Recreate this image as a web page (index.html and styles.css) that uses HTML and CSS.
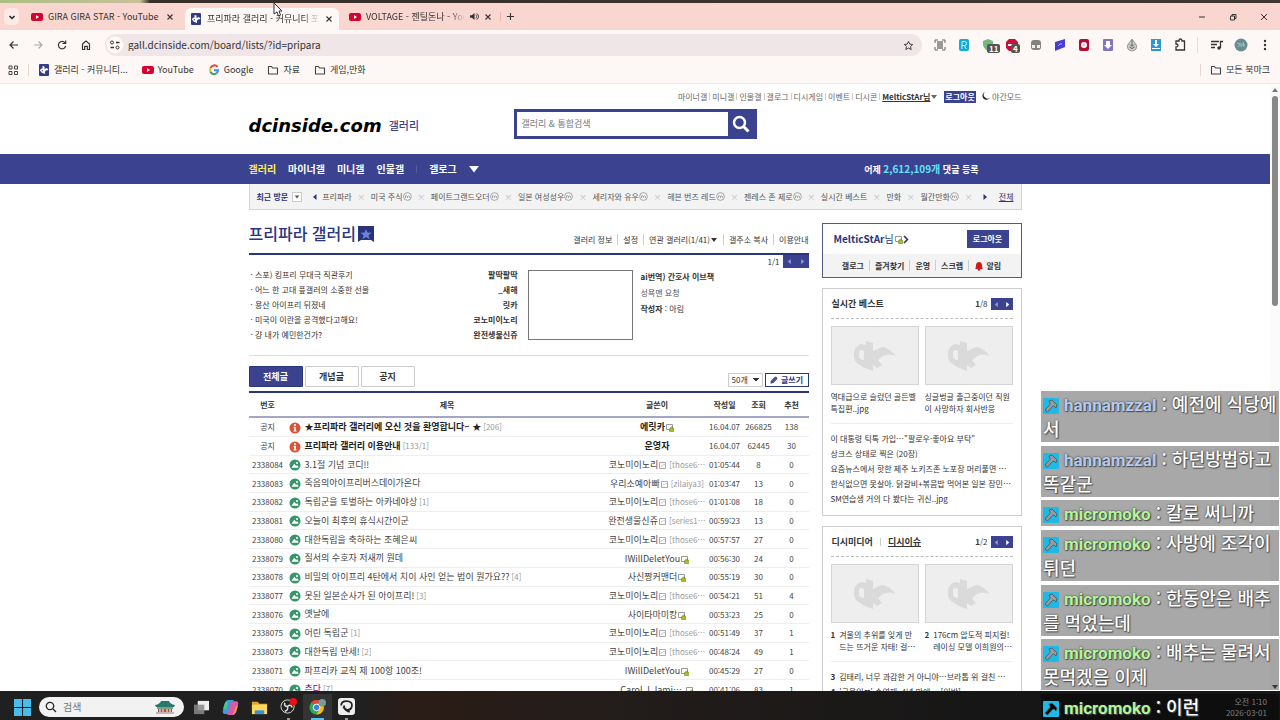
FILE: index.html
```html
<!DOCTYPE html>
<html lang="ko">
<head>
    <meta charset="UTF-8">
    <meta name="viewport" content="width=device-width, initial-scale=1.0">
    <title>프리파라 갤러리 - 커뮤니티 포털 디시인사이드</title>
    <link rel="stylesheet" href="styles.css">
</head>
<body>

<svg class="defs" aria-hidden="true">
    <symbol id="yt" viewBox="0 0 12 10"><rect y="1" width="12" height="8" rx="2" fill="#d9002f"/><path d="M5 3l3 2-3 2z" fill="#fff"/></symbol>
    <symbol id="dc" viewBox="0 0 12 12"><rect x="1" width="10" height="12" rx="1" fill="#353c86"/><path d="M4.500 2l2 .5V5L9 4l1.500 2L8 6.500 7 7.500V10L3.500 8.500 2 6.500q0-2 2.500-2zM3.700 6v1.300l1 .3V6z" fill="#fff" fill-rule="evenodd"/></symbol>
    <symbol id="close" viewBox="0 0 8 8"><path d="M1.500 1.500l5 5M6.500 1.500l-5 5" stroke="#333" stroke-width="1.100" fill="none"/></symbol>
    <symbol id="folder" viewBox="0 0 12 12"><path d="M1.500 2.500h3l1 1.500h5v6h-9z" stroke="#444" stroke-width="1.100" fill="none" stroke-linejoin="round"/></symbol>
    <symbol id="info" viewBox="0 0 12 12"><circle cx="6" cy="6" r="5.500" fill="#dd5135"/><circle cx="6" cy="3.200" r="1.100" fill="#fff"/><path d="M4.600 5h2.300v3.500h.7v1H4.500v-1h.7V6h-.6z" fill="#fff"/></symbol>
    <symbol id="photo" viewBox="0 0 12 12"><circle cx="6" cy="6" r="5.500" fill="#38946b"/><path d="M2.500 8.700l2.700-4 2 2.200 1-1 1.500 2.800z" fill="#fff"/><circle cx="8" cy="4" r="1.100" fill="#fff"/></symbol>
    <symbol id="gon" viewBox="0 0 9 9"><path d="M1.500 1.500h6v6h-6z" fill="none" stroke="#aaa"/><path d="M3 5.500l1.500-1.500M5.500 3l1 1" stroke="#aaa"/></symbol>
    <symbol id="fix" viewBox="0 0 9 9"><path d="M1.500 1.500h6v5h-6z" fill="#fff" stroke="#999"/><path d="M5.700 5.500V4.700q1-1.400 2 0v.8" fill="none" stroke="#758d20"/><rect x="4.500" y="5.200" width="4.300" height="3.600" rx=".6" fill="#a9bf1c" stroke="#657816" stroke-width=".5"/></symbol>
    <symbol id="mi" viewBox="0 0 9 9"><circle cx="4.500" cy="4.500" r="3.900" fill="none" stroke="#888" stroke-width=".7"/><path d="M2.500 6V3.500M2.500 4.500q1-1.400 2 0V6M4.500 4.500q1-1.400 2 0V6" fill="none" stroke="#888" stroke-width=".7"/></symbol>
    <symbol id="thumb" viewBox="0 0 42 32"><path d="M12 1l7 2v8l9-4q6 0 14 9-7-3-13 0l-5 4 4 5-5 3-4-3v6Q7 27 2 22q-3-4-2-10 1-6 7-8l5 1zM5 11v6q1 3 5 3v-9q-3-2-5 0z" fill="#dadada" fill-rule="evenodd"/></symbol>
    <symbol id="down" viewBox="0 0 8 8"><path d="M1 2h6L4 6z" fill="currentColor"/></symbol>
    <symbol id="left" viewBox="0 0 8 8"><path d="M5.500 1v6L2 4z" fill="currentColor"/></symbol>
    <symbol id="right" viewBox="0 0 8 8"><path d="M2.500 1v6L6 4z" fill="currentColor"/></symbol>
    <symbol id="hammer" viewBox="0 0 16 16"><rect width="16" height="16" rx="1" fill="#20b9e5"/><path d="M6 3l3-1 5 5-1 3-2-2-1.500.5L4.500 14 2 12l5-5.500V5z" fill="currentColor" stroke="#44545b" stroke-width=".8"/></symbol>
</svg>

<div class="wallpaper"></div>
<header class="tabstrip">
    <button class="tab-search" aria-label="탭 검색"><svg viewBox="0 0 12 12"><path d="M3.500 5L6 7.500 8.500 5" fill="none" stroke="#222" stroke-width="1.500"/></svg></button>
    <div class="tab"><svg class="favicon"><use href="#yt"/></svg><span>GIRA GIRA STAR - YouTube</span><button aria-label="닫기"><svg><use href="#close"/></svg></button></div>
    <div class="tab active"><svg class="favicon"><use href="#dc"/></svg><span>프리파라 갤러리 - 커뮤니티 포털</span><button aria-label="닫기"><svg><use href="#close"/></svg></button></div>
    <div class="tab"><svg class="favicon"><use href="#yt"/></svg><span>VOLTAGE - 젠틸돈나 - YouTube</span><svg class="sound" viewBox="0 0 10 10"><path d="M0 3.500h2L5 1v8L2 6.500H0z" fill="#333"/><path d="M6.500 3q2 2 0 4M7.500 1.500q4 3.500 0 7" fill="none" stroke="#333"/></svg><button aria-label="닫기"><svg><use href="#close"/></svg></button></div>
    <button class="new-tab" aria-label="새 탭"><svg viewBox="0 0 10 10"><path d="M5 1v8M1 5h8" stroke="#333" stroke-width="1.200"/></svg></button>
    <div class="window-buttons">
        <button aria-label="최소화"><svg viewBox="0 0 10 10"><path d="M2 5h6" stroke="#333"/></svg></button>
        <button aria-label="이전 크기로"><svg viewBox="0 0 10 10"><path d="M2.500 4h4v4h-4zM4 4V2.500h4v4H6.500" fill="none" stroke="#333"/></svg></button>
        <button aria-label="창 닫기"><svg viewBox="0 0 10 10"><path d="M2 2l6 6M8 2L2 8" stroke="#333"/></svg></button>
    </div>
</header>

<div class="toolbar">
    <div class="nav-buttons">
        <button aria-label="뒤로"><svg viewBox="0 0 12 12"><path d="M10 6H2.500M5.500 2.500L2 6l3.500 3.500" fill="none" stroke="#333" stroke-width="1.200"/></svg></button>
        <button aria-label="앞으로"><svg viewBox="0 0 12 12"><path d="M2 6h7.500M6.500 2.500L10 6 6.500 9.500" fill="none" stroke="#aaa" stroke-width="1.200"/></svg></button>
        <button aria-label="새로고침"><svg viewBox="0 0 12 12"><path d="M9 3.800A3.700 3.700 0 1 0 9.700 7M9.700 1.500V4.500H6.500" fill="none" stroke="#333" stroke-width="1.200"/></svg></button>
        <button aria-label="홈"><svg viewBox="0 0 12 12"><path d="M2.500 5L6 2l3.500 3v5.500H7.300V7.300H4.700v3.200H2.500z" fill="none" stroke="#333" stroke-width="1.200"/></svg></button>
    </div>
    <div class="omnibox">
        <svg class="site-info" viewBox="0 0 18 18"><circle cx="9" cy="9" r="8.500" fill="#fdf8f6"/><path d="M5 6.500h2M10 6.500h3.500M4.500 11.500H8" stroke="#333" stroke-width="1.300"/><circle cx="6" cy="6.500" r="1.500" fill="#fff" stroke="#333"/><circle cx="11.500" cy="11.500" r="1.500" fill="#fff" stroke="#333"/></svg>
        <input type="text" aria-label="주소창" value="gall.dcinside.com/board/lists/?id=pripara">
        <svg class="star" viewBox="0 0 12 12"><path d="M6 1.500l1.400 3 3.200.4-2.400 2.200.7 3.300L6 8.800l-2.900 1.600.7-3.300L1.400 4.900l3.200-.4z" fill="none" stroke="#333"/></svg>
    </div>
    <div class="extensions">
        <svg viewBox="0 0 16 16"><rect x="5" y="4" width="6" height="8" fill="#999"/><path d="M3 6V3h3M10 3h3v3M13 10v3h-3M6 13H3v-3" fill="none" stroke="#666"/></svg>
        <svg viewBox="0 0 16 16"><rect x="3" y="2" width="10" height="12" rx="2" fill="#14acd2"/><path d="M6 12V4.500h2.500q2 0 2 2t-2 2H6M8 8.500l2.500 3.500" fill="none" stroke="#c8f4ff"/></svg>
        <span class="ext"><svg viewBox="0 0 16 16"><path d="M3 4l5-2 5 2v4q-1 4-5 6-4-2-5-6z" fill="#72ba83"/></svg><b>11</b></span>
        <span class="ext"><svg viewBox="0 0 16 16"><path d="M5 2h6l3 3v6l-3 3H5l-3-3V5z" fill="#c9123b"/><path d="M4 8h8" stroke="#fff" stroke-width="2"/></svg><b>4</b></span>
        <svg viewBox="0 0 16 16"><rect x="3" y="3" width="10" height="10" rx="3" fill="#84827c"/><path d="M4 8h3v3H4zM9 8h3v3H9z" fill="#eee"/></svg>
        <svg viewBox="0 0 16 16"><path d="M3 5l10-3v8L3 14z" fill="#4a3ed2"/><path d="M6 9q2-3 4-2" stroke="#b2adff" fill="none"/></svg>
        <svg viewBox="0 0 16 16"><rect x="3" y="2" width="10" height="12" rx="2" fill="#b50d35"/><circle cx="8" cy="8" r="3" fill="#fff"/><circle cx="8" cy="8" r="1.200" fill="#f2b6c4"/></svg>
        <svg viewBox="0 0 16 16"><rect x="3" y="2" width="10" height="12" rx="1" fill="#8074c3"/><path d="M6 4h4v4h2l-4 4-4-4h2z" fill="#fff"/></svg>
        <svg viewBox="0 0 16 16"><path d="M8 2l3 4q3 3 1 6-2 2-4 2t-4-2q-2-3 1-6z" fill="#ccc" stroke="#888" stroke-width=".8"/><path d="M8 3v6M6 7.500L8 9.500l2-2M5.500 10q2.500 3 5 0" fill="none" stroke="#666"/></svg>
        <svg viewBox="0 0 16 16"><path d="M3 2h10v12H3z" fill="#2897dd"/><path d="M7 3h2v4h2l-3 3-3-3h2zM4 11h8v1H4z" fill="#fff"/></svg>
        <svg viewBox="0 0 16 16"><path d="M4 4h3q0-2 1.500-2T10 4h2.500v9H4v-3q2 0 2-1.500T4 7z" fill="none" stroke="#333" stroke-width="1.300"/></svg>
    </div>
    <div class="profile">
        <svg viewBox="0 0 16 16"><path d="M2 4.500h8M2 7.500h6M2 10.500h4M11.500 11V4.500H14" fill="none" stroke="#333" stroke-width="1.300"/><circle cx="10" cy="11" r="1.700" fill="#333"/></svg>
        <svg viewBox="0 0 16 16"><circle cx="8" cy="8" r="6.500" fill="#668e91"/><path d="M4 6l3 1-2 3M8 6v4M10 5l1 5M9 8h3" fill="none" stroke="#a7c0c3"/></svg>
        <svg viewBox="0 0 16 16"><g fill="#333"><circle cx="8" cy="4" r="1.200"/><circle cx="8" cy="8" r="1.200"/><circle cx="8" cy="12" r="1.200"/></g></svg>
    </div>
</div>

<nav class="bookmarks">
    <a href="#" aria-label="앱"><svg viewBox="0 0 12 12"><path d="M2 2h3v3H2zM7.500 2h3v3h-3zM2 7.500h3v3H2zM7.500 7.500h3v3h-3z" fill="none" stroke="#444"/></svg></a>
    <i></i>
    <a href="#"><svg><use href="#dc"/></svg>갤러리 - 커뮤니티...</a>
    <a href="#"><svg><use href="#yt"/></svg>YouTube</a>
    <a href="#"><svg viewBox="0 0 12 12" fill="none" stroke-width="2"><path d="M9.500 3A4 4 0 0 0 2.500 4" stroke="#ea4335"/><path d="M2.500 4a4 4 0 0 0 0 4" stroke="#fbbc05"/><path d="M2.500 8a4 4 0 0 0 6 1.300" stroke="#34a853"/><path d="M8.500 9.300q1.500-1 1.500-3H6" stroke="#4285f4"/></svg>Google</a>
    <a href="#"><svg><use href="#folder"/></svg>자료</a>
    <a href="#"><svg><use href="#folder"/></svg>게임,만화</a>
    <i class="push"></i>
    <a href="#"><svg><use href="#folder"/></svg>모든 북마크</a>
</nav>

<div class="viewport">
    <div class="page">
        <div class="wrap top">
            <ul class="util">
                <li><a href="#">마이너갤</a></li><li><a href="#">미니갤</a></li><li><a href="#">인물갤</a></li><li><a href="#">갤로그</a></li><li><a href="#">디시게임</a></li><li><a href="#">이벤트</a></li><li><a href="#">디시콘</a></li>
                <li><a class="me" href="#">MelticStAr님</a><svg><use href="#down"/></svg></li>
                <li><button class="logout-small">로그아웃</button></li>
                <li><a href="#"><svg viewBox="0 0 8 8"><path d="M3 0a4 4 0 1 0 5 5.500A3.500 3.500 0 0 1 3 0z" fill="#222"/></svg> 야간모드</a></li>
            </ul>
            <div class="head">
                <h1><a class="logo" href="#">dcinside.com</a> <a class="logo-sub" href="#">갤러리</a></h1>
                <form class="search">
                    <input type="text" aria-label="통합검색" placeholder="갤러리 &amp; 통합검색">
                    <button type="button" aria-label="검색"><svg viewBox="0 0 18 18"><circle cx="7.500" cy="7.500" r="5.500" fill="none" stroke="#fff" stroke-width="2.500"/><path d="M11.500 11.500l5 5" stroke="#fff" stroke-width="3"/></svg></button>
                </form>
            </div>
        </div>

        <div class="gnb">
            <div class="wrap">
                <nav><a class="on" href="#">갤러리</a><a href="#">마이너갤</a><a href="#">미니갤</a><a href="#">인물갤</a><i></i><a href="#">갤로그</a><a href="#" aria-label="더보기"><svg viewBox="0 0 10 8"><path d="M0 1h10L5 7.500z" fill="#fff"/></svg></a></nav>
                <p>어제 <em>2,612,109개</em> 댓글 등록</p>
            </div>
        </div>

        <div class="wrap visit">
            <strong>최근 방문</strong>
            <button class="visit-open" aria-label="펼치기"><svg><use href="#down"/></svg></button>
            <svg class="arrow"><use href="#left"/></svg>
            <ul>
                <li><a href="#">프리파라</a><span>×</span></li>
                <li><a href="#">미국 주식<svg><use href="#mi"/></svg></a><span>×</span></li>
                <li><a href="#">페이트그랜드오더<svg><use href="#mi"/></svg></a><span>×</span></li>
                <li><a href="#">일본 여성성우<svg><use href="#mi"/></svg></a><span>×</span></li>
                <li><a href="#">세리자와 유우<svg><use href="#mi"/></svg></a><span>×</span></li>
                <li><a href="#">헤븐 번즈 레드<svg><use href="#mi"/></svg></a><span>×</span></li>
                <li><a href="#">젠레스 존 제로<svg><use href="#mi"/></svg></a><span>×</span></li>
                <li><a href="#">실시간 베스트</a><span>×</span></li>
                <li><a href="#">만화</a><span>×</span></li>
                <li><a href="#">월간만화<svg><use href="#mi"/></svg></a><span>×</span></li>
            </ul>
            <svg class="arrow"><use href="#right"/></svg>
            <a class="all" href="#">전체</a>
        </div>

        <div class="wrap columns">
            <main>
                <div class="gall-title">
                    <h2>프리파라 갤러리</h2>
                    <svg viewBox="0 0 16 16"><path d="M0 0h16v16l-3-2H3l-3 2z" fill="#29327b"/><path d="M8 3l1.500 3.500 4 .3-3 2.500 1 4L8 11l-3.500 2.300 1-4-3-2.500 4-.3z" fill="#6d80d2"/></svg>
                    <ul><li><a href="#">갤러리 정보</a></li><li><a href="#">설정</a></li><li><a href="#">연관 갤러리(1/41)<svg><use href="#down"/></svg></a></li><li><a href="#">갤주소 복사</a></li><li><a href="#">이용안내</a></li></ul>
                </div>
                <section class="issue">
                    <ul class="issue-list">
                        <li><a href="#">· 스포) 킹프리 무대극 직관후기</a><b>팔딱팔딱</b></li>
                        <li><a href="#">· 어느 한 고대 픞갤러의 소중한 선물</a><b>_새해</b></li>
                        <li><a href="#">· 용산 아이프리 뒤졌네</a><b>릿카</b></li>
                        <li><a href="#">· 미국이 이란을 공격했다고해요!</a><b>코노미이노리</b></li>
                        <li><a href="#">· 걍 내가 예민한건가?</a><b>완전생물신쥬</b></li>
                    </ul>
                    <div class="issue-img"></div>
                    <div class="issue-text">
                        <b>ai번역) 간호사 이브책</b>
                        <p>성욕맨 요청</p>
                        <p class="by"><b>작성자</b> : 아림</p>
                    </div>
                    <div class="pager"><span>1/1</span><button aria-label="이전"><svg><use href="#left"/></svg></button><button aria-label="다음"><svg><use href="#right"/></svg></button></div>
                </section>
                <div class="list-tools">
                    <button class="list-tab on">전체글</button><button class="list-tab">개념글</button><button class="list-tab">공지</button>
                    <select aria-label="목록 개수"><option>50개</option></select>
                    <button class="write"><svg viewBox="0 0 10 10"><path d="M1 9l.7-3L6.500 1.200q2.700 0 2.300 2.300L4 8.300zM2 6l2 2M3.500 6.500L7 3" fill="#5963a5" stroke="#29367c" stroke-width=".9"/></svg>글쓰기</button>
                </div>
                <table class="board">
                    <colgroup><col class="c-num"><col><col class="c-writer"><col class="c-date"><col class="c-view"><col class="c-rec"></colgroup>
                    <thead><tr><th>번호</th><th>제목</th><th>글쓴이</th><th>작성일</th><th>조회</th><th>추천</th></tr></thead>
                    <tbody>
                        <tr class="notice"><td>공지</td><td><svg><use href="#info"/></svg><a href="#">★프리파라 갤러리에 오신 것을 환영합니다~ ★</a><small>[206]</small></td><td>에릿카<svg><use href="#fix"/></svg></td><td>16.04.07</td><td>266825</td><td>138</td></tr>
                        <tr class="notice"><td>공지</td><td><svg><use href="#info"/></svg><a href="#">프리파라 갤러리 이용안내</a><small>[133/1]</small></td><td>운영자</td><td>16.04.07</td><td>62445</td><td>30</td></tr>
                        <tr><td>2338084</td><td><svg><use href="#photo"/></svg><a href="#">3.1절 기념 코디!!</a></td><td>코노미이노리<svg><use href="#gon"/></svg><small>[those6⋯</small></td><td>01:05:44</td><td>8</td><td>0</td></tr>
                        <tr><td>2338083</td><td><svg><use href="#photo"/></svg><a href="#">죽음의아이프리버스데이가온다</a></td><td>우리소예아빠<svg><use href="#gon"/></svg><small>[zilaiya3]</small></td><td>01:03:47</td><td>13</td><td>0</td></tr>
                        <tr><td>2338082</td><td><svg><use href="#photo"/></svg><a href="#">독립군을 토벌하는 아카네야상</a><small>[1]</small></td><td>코노미이노리<svg><use href="#gon"/></svg><small>[those6⋯</small></td><td>01:01:08</td><td>18</td><td>0</td></tr>
                        <tr><td>2338081</td><td><svg><use href="#photo"/></svg><a href="#">오늘이 최후의 휴식시간이군</a></td><td>완전생물신쥬<svg><use href="#gon"/></svg><small>[series1⋯</small></td><td>00:59:23</td><td>13</td><td>0</td></tr>
                        <tr><td>2338080</td><td><svg><use href="#photo"/></svg><a href="#">대한독립을 축하하는 조혜은씨</a></td><td>코노미이노리<svg><use href="#gon"/></svg><small>[those6⋯</small></td><td>00:57:57</td><td>27</td><td>0</td></tr>
                        <tr><td>2338079</td><td><svg><use href="#photo"/></svg><a href="#">질서의 수호자 저새끼 뭔데</a></td><td>IWillDeletYou<svg><use href="#fix"/></svg></td><td>00:56:30</td><td>24</td><td>0</td></tr>
                        <tr><td>2338078</td><td><svg><use href="#photo"/></svg><a href="#">비밀의 아이프리 4탄에서 치이 사인 얻는 법이 뭔가요??</a><small>[4]</small></td><td>사신짱커맨더<svg><use href="#fix"/></svg></td><td>00:55:19</td><td>30</td><td>0</td></tr>
                        <tr><td>2338077</td><td><svg><use href="#photo"/></svg><a href="#">못된 일본순사가 된 아이프리!</a><small>[3]</small></td><td>코노미이노리<svg><use href="#gon"/></svg><small>[those6⋯</small></td><td>00:54:21</td><td>51</td><td>4</td></tr>
                        <tr><td>2338076</td><td><svg><use href="#photo"/></svg><a href="#">옛날에</a></td><td>사이타마미캉<svg><use href="#fix"/></svg></td><td>00:53:23</td><td>25</td><td>0</td></tr>
                        <tr><td>2338075</td><td><svg><use href="#photo"/></svg><a href="#">어린 독립군</a><small>[1]</small></td><td>코노미이노리<svg><use href="#gon"/></svg><small>[those6⋯</small></td><td>00:51:49</td><td>37</td><td>1</td></tr>
                        <tr><td>2338073</td><td><svg><use href="#photo"/></svg><a href="#">대한독립 만세!</a><small>[2]</small></td><td>코노미이노리<svg><use href="#gon"/></svg><small>[those6⋯</small></td><td>00:48:24</td><td>49</td><td>1</td></tr>
                        <tr><td>2338071</td><td><svg><use href="#photo"/></svg><a href="#">파프리카 교칙 제 100항 100조!</a></td><td>IWillDeletYou<svg><use href="#fix"/></svg></td><td>00:45:29</td><td>27</td><td>0</td></tr>
                        <tr><td>2338070</td><td><svg><use href="#photo"/></svg><a class="visited" href="#">츤다</a><small>[7]</small></td><td>Carol.J.Jami⋯ <svg><use href="#fix"/></svg></td><td>00:41:06</td><td>83</td><td>1</td></tr>
                    </tbody>
                </table>
            </main>

            <aside>
                <section class="login">
                    <div class="login-top"><a href="#"><b>MelticStAr</b>님<svg><use href="#fix"/></svg><svg class="go" viewBox="0 0 6 9"><path d="M1 1l3.500 3.500L1 8" fill="none" stroke="#29367c" stroke-width="1.600"/></svg></a><button>로그아웃</button></div>
                    <ul><li><a href="#">갤로그</a></li><li><a href="#">즐겨찾기</a></li><li><a href="#">운영</a></li><li><a href="#">스크랩</a></li><li><a href="#"><svg viewBox="0 0 10 10"><path d="M1 8q1-1 1-4 .5-3 3-3t3 3q0 3 1 4z" fill="#d31a1a"/><circle cx="5" cy="8.500" r="1.300" fill="#d31a1a"/></svg> 알림</a></li></ul>
                </section>
                <section class="box">
                    <div class="box-head"><h3>실시간 베스트</h3><div class="pager"><span><b>1</b>/8</span><button aria-label="이전"><svg><use href="#left"/></svg></button><button class="next" aria-label="다음"><svg><use href="#right"/></svg></button></div></div>
                    <div class="cards">
                        <a href="#"><span class="pic"><svg><use href="#thumb"/></svg></span><span class="cap">역대급으로 슬렀던 골든벨 특집편..jpg</span></a>
                        <a href="#"><span class="pic"><svg><use href="#thumb"/></svg></span><span class="cap">싱글벙글 출근중이던 직원이 사망하자 회사반응</span></a>
                    </div>
                    <ul class="links">
                        <li><a href="#">이 대통령 틱톡 가입⋯"팔로우·좋아요 부탁"</a></li>
                        <li><a href="#">상크스 상태로 찍은 (20장)</a></li>
                        <li><a href="#">요즘뉴스에서 핫한 제주 노키즈존 노포장 머리풀면 ⋯</a></li>
                        <li><a href="#">한식없으면 못살아. 닭갈비+볶음밥 먹어본 일본 장민⋯</a></li>
                        <li><a href="#">SM연습생 거의 다 봤다는 귀신..jpg</a></li>
                    </ul>
                </section>
                <section class="box">
                    <div class="box-head"><h3>디시미디어</h3><i></i><h3 class="sel">디시이슈</h3><div class="pager"><span><b>1</b>/2</span><button aria-label="이전"><svg><use href="#left"/></svg></button><button class="next" aria-label="다음"><svg><use href="#right"/></svg></button></div></div>
                    <div class="cards">
                        <a href="#"><span class="pic"><svg><use href="#thumb"/></svg></span><span class="cap rank"><b>1</b><span>겨울의 추위를 잊게 만드는 뜨거운 자태! 걸⋯</span></span></a>
                        <a href="#"><span class="pic"><svg><use href="#thumb"/></svg></span><span class="cap rank"><b>2</b><span>176cm 압도적 피지컬! 레이싱 모델 이희원의⋯</span></span></a>
                    </div>
                    <ul class="links">
                        <li><b>3</b><a href="#">김태리, 너무 과감한 거 아니야⋯브라톱 위 걸친 ⋯</a></li>
                        <li><b>4</b><a href="#">'금융인❤' 손연재, 4년 만에⋯ [이반]</a></li>
                    </ul>
                </section>
            </aside>
        </div>
    </div>
    <div class="scrollbar"><svg viewBox="0 0 8 8"><path d="M1 6h6L4 2z" fill="#777"/></svg><div class="scroll-thumb"></div><svg class="scroll-down"><use href="#down"/></svg></div>
</div>

<footer class="taskbar">
    <button aria-label="시작"><svg viewBox="0 0 16 16"><path d="M0 0h7.500v7.500H0zM8.500 0H16v7.500H8.500zM0 8.500h7.500V16H0zM8.500 8.500H16V16H8.500z" fill="#48bdeb"/></svg></button>
    <label class="task-search"><svg viewBox="0 0 12 12"><circle cx="5" cy="5" r="3.700" fill="none" stroke="#222" stroke-width="1.300"/><path d="M8 8l3 3" stroke="#222" stroke-width="1.300"/></svg><input type="text" placeholder="검색" aria-label="검색"><svg class="palace" viewBox="0 0 22 16"><path d="M1 6q5-1 6-4h8q1 3 6 4l-1 2H2z" fill="#28796b"/><path d="M3 8h16v2H3z" fill="#72a590"/><path d="M4 10h14v3H4z" fill="#ca4533"/><path d="M6 10v3M9 10v3M13 10v3M16 10v3" stroke="#fff"/><path d="M2 13h18v2H2z" fill="#bbb"/></svg></label>
    <button aria-label="작업 보기"><svg viewBox="0 0 18 16"><path d="M5 1h12v10H5z" fill="#eee"/><path d="M1 5h11v10H1z" fill="#888" fill-opacity=".85"/></svg></button>
    <button aria-label="코파일럿"><svg viewBox="0 0 16 16"><path d="M6 1h5L8 12q-1 2-3 2H2q-2-1-1-4l2-7q1-2 3-2z" fill="#3a9de0"/><path d="M10 15H5l3-11q1-2 3-2h3q2 1 1 4l-2 7q-1 2-3 2z" fill="#d75aa7"/><path d="M1 9l2-6 3-1-2 8z" fill="#51c28a"/><path d="M10 15l3-8 2-1-2 7q-1 2-3 2z" fill="#f39445"/></svg></button>
    <button aria-label="파일 탐색기"><svg viewBox="0 0 18 16"><path d="M1 2h6l2 2h8v11H1z" fill="#e2a62c"/><path d="M1 5h16v10H1z" fill="#ffd95e"/><path d="M4 11h10v4H4z" fill="#3892d4"/></svg></button>
    <button class="running" aria-label="OBS"><svg viewBox="0 0 18 18"><circle cx="8" cy="9" r="7" fill="#222" stroke="#ddd"/><path d="M8 9q-4 0-3-4M8 9q3-3 5 1M8 9q1 4-3 5" fill="none" stroke="#ddd" stroke-width="1.600"/><circle cx="14" cy="4" r="4" fill="#e91111"/></svg></button>
    <button class="running current" aria-label="Chrome"><svg viewBox="0 0 18 18"><circle cx="8" cy="10" r="7.500" fill="#33a852"/><path d="M1.500 6a7.500 7.500 0 0 1 13 0H8z" fill="#ea4335"/><path d="M14.500 6A7.500 7.500 0 0 1 8 17.500L11.500 11 8 6z" fill="#fbbc05"/><circle cx="8" cy="10" r="3.500" fill="#3f7de8" stroke="#fff"/><circle cx="14" cy="5" r="4" fill="#789ba0"/></svg></button>
    <button class="running" aria-label="클립 스튜디오"><svg viewBox="0 0 16 16"><rect width="16" height="16" rx="3" fill="#eee"/><path d="M3 7q0-4 5-4 6 0 5 5-1 4-5 3-3-1-2-4M5 8q2 4 6 5" fill="none" stroke="#222" stroke-width="1.700"/></svg></button>
    <div class="clock">오전 1:10<br>2026-03-01</div>
</footer>

<ul class="chat">
    <li><svg><use href="#hammer"/></svg><b class="blue">hannamzzal</b> : 예전에 식당에서</li>
    <li><svg><use href="#hammer"/></svg><b class="blue">hannamzzal</b> : 하던방법하고 똑같군</li>
    <li><svg><use href="#hammer"/></svg><b>micromoko</b> : 칼로 써니까</li>
    <li><svg><use href="#hammer"/></svg><b>micromoko</b> : 사방에 조각이 튀던</li>
    <li><svg><use href="#hammer"/></svg><b>micromoko</b> : 한동안은 배추를 먹었는데</li>
    <li><svg><use href="#hammer"/></svg><b>micromoko</b> : 배추는 물려서 못먹겠음 이제</li>
    <li class="last"><svg><use href="#hammer"/></svg><b>micromoko</b> : 이런</li>
</ul>
<svg class="cursor" viewBox="0 0 10 16"><path d="M1 1v11l3-2 1.500 4 2-1-1.500-4h3z" fill="#fff" stroke="#333"/></svg>

</body>
</html>
```
FILE: styles.css
```css
* {
    box-sizing: border-box;
}
body {
    margin: 0;
    height: 100vh;
    display: flex;
    flex-direction: column;
    overflow: hidden;
    background: #fff;
    color: #333;
    font-family: "Noto Sans CJK KR", sans-serif;
    font-size: 8px;
    line-height: 12px;
}
ul, h1, h2, h3, p {
    margin: 0;
    padding: 0;
    list-style: none;
}
a {
    color: inherit;
    text-decoration: none;
}
button, input, select {
    font: inherit;
    color: inherit;
    border: 0;
    padding: 0;
    margin: 0;
    background: none;
    border-radius: 0;
}
button {
    display: flex;
    align-items: center;
    justify-content: center;
    white-space: nowrap;
}
svg {
    flex: none;
    width: 8px;
    height: 8px;
}
.defs {
    position: absolute;
    width: 0;
    height: 0;
}

/* browser */
.wallpaper {
    flex: none;
    height: 3px;
    background: linear-gradient(90deg, #a9bf82 0, #c9bf9a 140px, #383028 150px, #40382e 100%);
}
.tabstrip, .toolbar, .bookmarks {
    flex: none;
    display: flex;
    align-items: center;
    font-size: 9px;
}
.tabstrip {
    height: 27px;
    padding-left: 4px;
    background: #fad6d0;
}
.tab-search {
    width: 15px;
    height: 17px;
    margin-right: 2px;
    border-radius: 5px;
    background: #fdeae6;
}
.tab-search svg {
    width: 12px;
    height: 12px;
}
.tab {
    display: flex;
    align-items: center;
    width: 159px;
    height: 22px;
    padding: 0 6px 0 10px;
    gap: 5px;
}
.tab.active {
    align-self: flex-end;
    margin-left: 5px;
    padding-left: 5px;
    width: 154px;
    border-radius: 6px 6px 0 0;
    background: #fdf8f5;
}
.tab .favicon {
    width: 12px;
    height: 12px;
}
.tab span {
    flex: 1;
    overflow: hidden;
    white-space: nowrap;
}
.tab.active span, .tab:nth-of-type(3) span {
    -webkit-mask-image: linear-gradient(90deg, #000 85%, transparent);
    mask-image: linear-gradient(90deg, #000 85%, transparent);
}
.tab .sound {
    width: 9px;
    height: 9px;
}
.new-tab {
    width: 20px;
    margin-left: 2px;
    border-left: 1px solid #e6b8b3;
}
.new-tab svg {
    width: 9px;
    height: 9px;
}
.window-buttons {
    display: flex;
    gap: 21px;
    margin-left: auto;
    padding-right: 11px;
}
.window-buttons svg {
    width: 10px;
    height: 10px;
}
.toolbar {
    height: 30px;
    padding: 0 8px;
    background: #fdf8f5;
}
.nav-buttons {
    display: flex;
    gap: 12px;
    margin-right: 13px;
}
.nav-buttons svg {
    width: 12px;
    height: 12px;
}
.omnibox {
    flex: 1;
    display: flex;
    align-items: center;
    height: 22px;
    padding: 0 8px 0 1px;
    border-radius: 11px;
    background: #f0e5e7;
    font-size: 10px;
}
.omnibox input {
    flex: 1;
    margin-left: 4px;
}
.omnibox .site-info {
    width: 18px;
    height: 18px;
}
.omnibox .star {
    width: 11px;
    height: 11px;
}
.extensions {
    display: flex;
    gap: 8px;
    margin-left: 10px;
}
.extensions svg, .profile svg {
    display: block;
    width: 16px;
    height: 16px;
}
.ext {
    position: relative;
}
.ext b {
    position: absolute;
    left: 7px;
    top: 7px;
    padding: 0 2px;
    border-radius: 2px;
    background: #555;
    color: #fff;
    font-size: 8px;
    line-height: 9px;
}
.profile {
    display: flex;
    gap: 8px;
    margin-left: 9px;
    padding-left: 11px;
    border-left: 1px solid #eadedb;
}
.profile svg:last-child {
    margin-right: -1px;
}
.bookmarks {
    height: 24px;
    padding: 0 10px 4px 7px;
    gap: 14px;
    background: #fdf8f5;
    border-bottom: 1px solid #eee8e5;
}
.bookmarks a {
    display: flex;
    align-items: center;
    gap: 4px;
}
.bookmarks svg {
    width: 12px;
    height: 12px;
}
.bookmarks i {
    height: 12px;
    margin: 0 -5px;
    border-left: 1px solid #ead4d0;
}
.bookmarks i.push {
    margin-left: auto;
}

/* page */
.viewport {
    flex: 1;
    min-height: 0;
    display: flex;
}
.page {
    flex: 1;
    overflow: hidden;
}
.wrap {
    width: 773px;
    max-width: 100%;
    margin: 0 auto;
}
.scrollbar {
    display: flex;
    flex-direction: column;
    width: 10px;
    padding: 2px 1px 0;
    background: #fbfbfb;
}
.scroll-thumb {
    width: 6px;
    height: 210px;
    margin: 2px 1px;
    border-radius: 3px;
    background: #888;
}
.scroll-down {
    margin-top: auto;
    color: #555;
}
.util {
    display: flex;
    justify-content: flex-end;
    align-items: center;
    height: 25px;
    color: #666;
}
.util li {
    display: flex;
    align-items: center;
}
.util li:nth-child(-n+7)::after {
    content: "";
    height: 7px;
    margin: 0 2px;
    border-left: 1px solid #ccc;
}
.util .me {
    color: #333;
    font-weight: bold;
    text-decoration: underline;
}
.logout-small {
    height: 12px;
    margin: 0 6px;
    padding: 0 1px;
    background: #3b4390;
    color: #fff;
    font-weight: bold;
}
.head {
    display: flex;
    align-items: center;
    padding-bottom: 15px;
}
.head h1 {
    display: flex;
    align-items: center;
    width: 265px;
    gap: 7px;
    padding-top: 2px;
    font-size: 11px;
}
.logo {
    color: #000;
    font: italic bold 18px "DejaVu Sans", sans-serif;
}
.logo-sub {
    color: #3b4390;
    font-weight: 500;
}
.search {
    display: flex;
    width: 243px;
    height: 30px;
    border: 3px solid #3b4390;
}
.search input {
    flex: 1;
    min-width: 0;
    padding: 0 5px;
    font-size: 9px;
}
.search input::placeholder {
    color: #777;
}
.search button {
    width: 26px;
    background: #3b4390;
}
.search svg {
    width: 18px;
    height: 18px;
}
.gnb {
    background: #3b4390;
    color: #fff;
    font-size: 10px;
    font-weight: bold;
}
.gnb .wrap {
    display: flex;
    align-items: center;
    height: 30px;
    padding-right: 43px;
}
.gnb nav {
    display: flex;
    align-items: center;
    gap: 12px;
}
.gnb nav i {
    height: 8px;
    border-left: 1px solid #545ca5;
}
.gnb nav svg {
    display: block;
    width: 10px;
}
.gnb .on {
    color: #fff04a;
}
.gnb p {
    margin-left: auto;
    font-size: 9px;
}
.gnb em {
    color: #5fe2f5;
    font-style: normal;
    font-size: 10px;
}
.visit {
    display: flex;
    align-items: center;
    height: 26px;
    padding: 0 7px;
    border: 1px solid #d5d5d5;
    border-top: 0;
    background: #f3f3f3;
    color: #555;
    white-space: nowrap;
}
.visit strong {
    color: #29367c;
}
.visit-open {
    width: 10px;
    height: 10px;
    margin: 0 9px 0 4px;
    border: 1px solid #ccc;
    background: #fff;
}
.visit-open svg {
    width: 6px;
    height: 6px;
}
.visit .arrow {
    color: #29367c;
}
.visit ul {
    flex: 1;
    display: flex;
    justify-content: space-between;
    margin: 0 8px 0 3px;
}
.visit li {
    display: contents;
}
.visit li span {
    color: #bbb;
}
.visit .all {
    margin-left: 10px;
    color: #29367c;
    text-decoration: underline;
}
.columns {
    display: flex;
    align-items: flex-start;
    gap: 13px;
    padding-top: 13px;
}
main {
    flex: 1;
    min-width: 0;
}
.gall-title {
    display: flex;
    align-items: flex-start;
    height: 32px;
    border-bottom: 2px solid #29367c;
}
.gall-title h2 {
    color: #29367c;
    font-size: 16px;
    line-height: 20px;
    font-weight: 500;
}
.gall-title > svg {
    width: 16px;
    height: 16px;
    margin: 3px 0 0 2px;
}
.gall-title ul {
    display: flex;
    margin: 11px 0 0 auto;
}
.gall-title li + li::before {
    content: "";
    margin: 0 5px;
    border-left: 1px solid #ccc;
}
.gall-title li svg {
    vertical-align: -1px;
}
.pager {
    display: flex;
    align-items: center;
    margin-left: auto;
}
.pager span {
    margin-right: 3px;
}
.pager button {
    width: 11px;
    height: 12px;
    background: #3b4390;
    color: #939ad0;
}
.pager .next {
    color: #fff;
}
.pager svg {
    width: 7px;
    height: 7px;
}
.issue {
    display: flex;
    align-items: flex-start;
    height: 101px;
    border-bottom: 1px solid #ddd;
}
.issue-list {
    width: 269px;
    margin: 12px 10px 0 0;
    padding-left: 2px;
}
.issue-list li {
    display: flex;
    justify-content: space-between;
    line-height: 15px;
}
.issue-img {
    width: 105px;
    height: 70px;
    margin: 15px 8px 0 0;
    border: 1px solid #777;
}
.issue-text {
    padding-top: 14px;
    line-height: 16px;
}
.issue-text p {
    color: #555;
}
.issue .by {
    color: #333;
}
.issue .pager button {
    width: 13px;
    height: 13px;
}
.list-tools {
    display: flex;
    align-items: flex-end;
    gap: 2px;
    height: 35px;
    padding-bottom: 4px;
}
.list-tab {
    width: 54px;
    height: 21px;
    border: 1px solid #ccc;
    border-radius: 1px;
    font-size: 9px;
    font-weight: bold;
}
.list-tab.on {
    border-color: #29367c;
    background: #3b4390;
    color: #fff;
}
.list-tools select {
    width: 35px;
    height: 14px;
    margin-left: auto;
    padding-left: 3px;
    border: 1px solid #ccc;
    appearance: none;
    background: linear-gradient(to bottom left, #333 50%, transparent 52%) right 6px center / 3px 4px no-repeat, linear-gradient(to bottom right, #333 50%, transparent 52%) right 3px center / 3px 4px no-repeat;
}
.write {
    width: 44px;
    height: 14px;
    gap: 3px;
    border: 1px solid #29367c;
    color: #29367c;
    font-weight: bold;
}
.board {
    width: 100%;
    height: 308px;
    table-layout: fixed;
    border-collapse: collapse;
    border-top: 2px solid #29367c;
    line-height: 13px;
}
.c-num {
    width: 38px;
}
.c-writer {
    width: 99px;
}
.c-date {
    width: 36px;
}
.c-view {
    width: 32px;
}
.c-rec {
    width: 34px;
}
.board th, .board td {
    padding: 0;
    text-align: center;
    white-space: nowrap;
}
.board th {
    height: 25px;
    border-bottom: 2px solid #a3a6c4;
}
.board td {
    border-bottom: 1px solid #eee;
    color: #444;
}
.board td:nth-child(2) {
    padding-left: 2px;
    text-align: left;
    font-size: 9px;
}
.board td:nth-child(2) svg {
    width: 12px;
    height: 12px;
    margin-right: 4px;
    vertical-align: middle;
}
.board td:nth-child(3) {
    font-size: 9px;
}
.board td:nth-child(3) svg, .login-top svg, .visit li svg {
    width: 9px;
    height: 9px;
    vertical-align: -2px;
}
.visit li svg {
    vertical-align: -1px;
}
.board small {
    margin-left: 2px;
    color: #999;
    font-size: 8px;
    font-weight: normal;
}
.board .notice td:nth-child(2), .board .notice td:nth-child(3) {
    color: #222;
    font-weight: bold;
}
.board .visited {
    color: #770088;
}
aside {
    width: 200px;
}
.login {
    border: 1px solid #555b80;
}
.login-top {
    display: flex;
    align-items: center;
    justify-content: space-between;
    height: 30px;
    padding: 0 12px 0 11px;
    color: #29367c;
}
.login-top a {
    display: flex;
    align-items: center;
    font-size: 10px;
}
.login-top .go {
    width: 6px;
}
.login-top button {
    width: 42px;
    height: 18px;
    background: #3b4390;
    color: #fff;
    font-weight: bold;
}
.login ul {
    display: flex;
    align-items: center;
    justify-content: center;
    height: 23px;
    background: #f3f3f3;
    font-weight: bold;
}
.login li + li::before {
    content: "";
    margin: 0 5px;
    border-left: 1px solid #ccc;
}
.login li svg {
    width: 10px;
    height: 10px;
    vertical-align: -2px;
}
.box {
    margin-top: 10px;
    padding: 7px 8px 9px;
    border: 1px solid #ccc;
}
.box-head {
    display: flex;
    align-items: center;
    height: 23px;
    padding: 0 0 6px 1px;
    border-bottom: 1px dashed #bbb;
}
.box-head h3 {
    font-size: 9px;
}
.box-head i {
    height: 8px;
    margin: 0 7px;
    border-left: 1px solid #ccc;
}
.box-head .sel {
    text-decoration: underline;
}
.cards {
    display: grid;
    grid-template-columns: 1fr 1fr;
    gap: 6px;
    padding: 7px 0 8px;
    border-bottom: 1px solid #eee;
}
.pic {
    display: flex;
    align-items: center;
    justify-content: center;
    height: 59px;
    margin-bottom: 6px;
    border: 1px solid #d5d5d5;
    background: #eee;
}
.pic svg {
    width: 42px;
    height: 32px;
}
.cap {
    display: block;
    height: 24px;
    overflow: hidden;
    word-break: break-all;
}
.rank {
    display: flex;
    gap: 4px;
}
.links {
    padding-top: 7px;
}
.links li {
    display: flex;
    gap: 4px;
    line-height: 15px;
    white-space: nowrap;
}

/* taskbar */
.taskbar {
    flex: none;
    display: flex;
    align-items: center;
    height: 29px;
    padding: 3px 0 0 14px;
    background: linear-gradient(90deg, #202020 360px, #2b1c16 410px, #231d1b 600px, #161616 1000px);
}
.taskbar button {
    width: 29px;
    height: 26px;
}
.taskbar button:first-child {
    width: 16px;
    margin-right: 9px;
}
.taskbar button svg {
    width: 17px;
    height: 17px;
}
.task-search {
    display: flex;
    align-items: center;
    width: 145px;
    height: 20px;
    margin-right: 3px;
    padding: 0 8px 0 6px;
    border-radius: 10px;
    background: #f2f2f2;
}
.task-search svg {
    width: 12px;
    height: 12px;
}
.task-search input {
    flex: 1;
    min-width: 0;
    padding-left: 6px;
    font-size: 10px;
}
.task-search .palace {
    width: 22px;
    height: 16px;
}
.taskbar .running {
    border-bottom: 2px solid transparent;
    border-image: linear-gradient(90deg, transparent 45%, #999 45%, #999 55%, transparent 55%) 2;
}
.taskbar .current {
    background: #333;
    border-image: linear-gradient(90deg, transparent 30%, #54bff0 30%, #54bff0 70%, transparent 70%) 2;
}
.clock {
    margin-left: auto;
    padding-right: 13px;
    color: #bbb;
    line-height: 11px;
    text-align: right;
}

/* stream chat */
.chat {
    position: absolute;
    right: 1px;
    top: 391px;
    bottom: 0;
    width: 238px;
    display: flex;
    flex-direction: column;
    justify-content: space-between;
    color: #fff;
    font-size: 18px;
    font-weight: 500;
    line-height: 25px;
    text-shadow: 0 0 2px #333, 1px 1px 1px #555;
}
.chat li {
    padding: 0 0 1px 2px;
    background: rgba(0, 0, 0, 0.34);
    word-break: break-all;
}
.chat svg {
    width: 16px;
    height: 16px;
    margin-right: 5px;
    vertical-align: -3px;
    color: #9a9a9a;
}
.chat .last svg {
    color: #000;
}
.chat b {
    color: #b3f59a;
    font-family: Roboto, sans-serif;
    font-size: 17px;
    line-height: 16px;
    font-weight: 700;
}
.chat .blue {
    color: #b4cbee;
}
.cursor {
    position: absolute;
    left: 273px;
    top: 2px;
    width: 10px;
    height: 16px;
}
```
